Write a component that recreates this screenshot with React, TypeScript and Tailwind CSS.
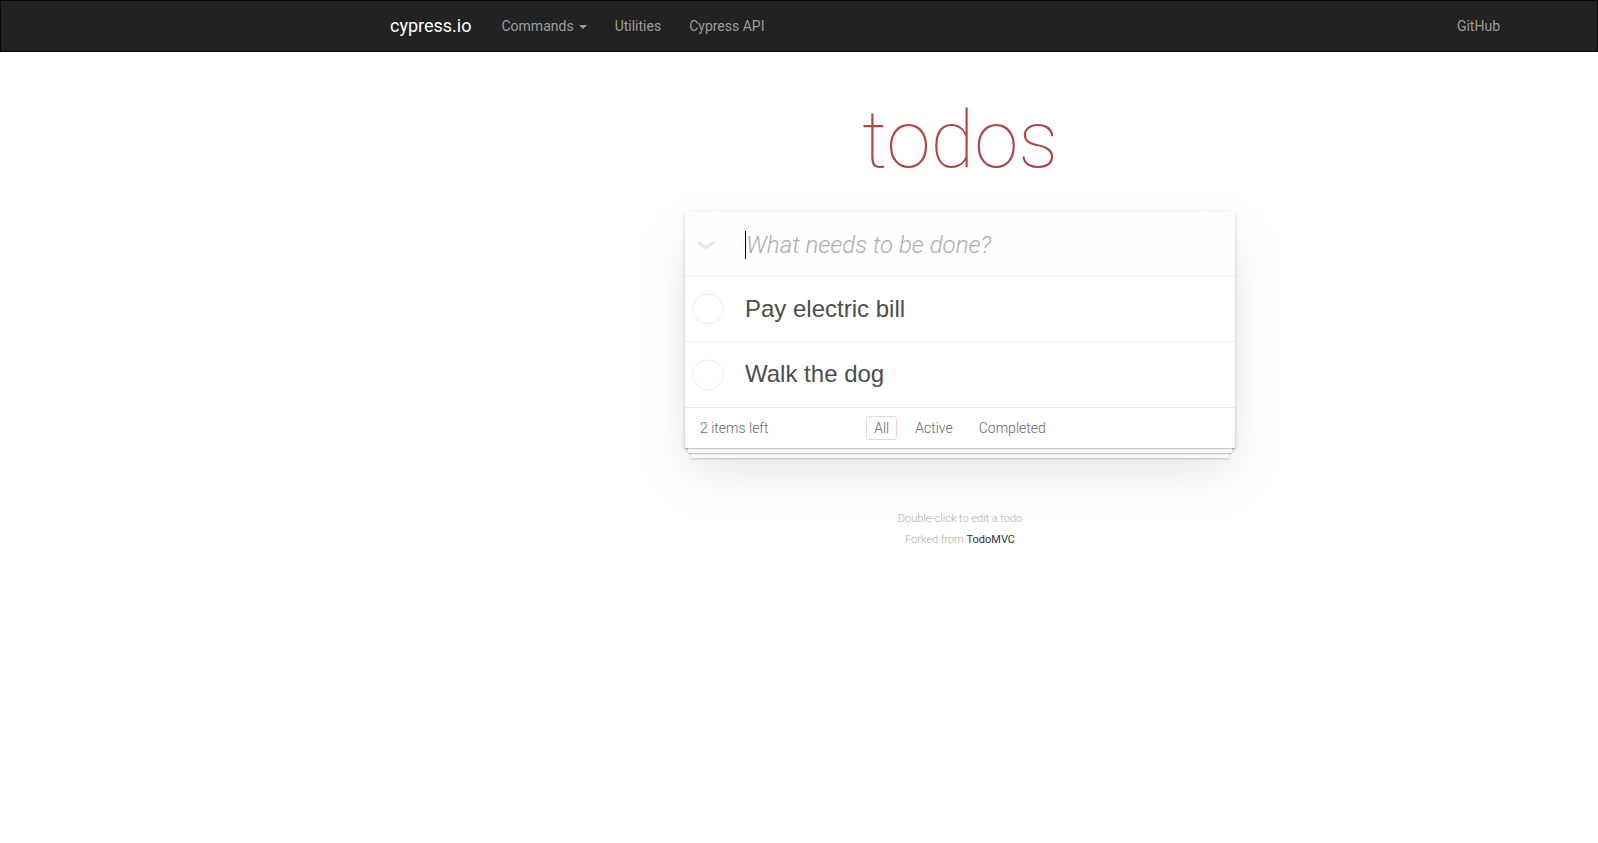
import React from 'react';

// ============================================================
// TodoMVC page — cypress.io example app
// ============================================================

type Todo = { id: number; title: string; completed: boolean };

const todos: Todo[] = [
    { id: 1, title: 'Pay electric bill', completed: false },
    { id: 2, title: 'Walk the dog', completed: false },
];

const navLinks = [
    { label: 'Commands', caret: true },
    { label: 'Utilities', caret: false },
    { label: 'Cypress API', caret: false },
];

const filters = ['All', 'Active', 'Completed'];

function Navbar() {
    return (
        <nav className="h-[52px] bg-[#222] border border-[#080808] flex items-center justify-between pl-[374px] pr-[82px] font-['Roboto',sans-serif]">
            <div className="flex items-center">
                <a href="#" className="pl-[15px] pr-[16px] text-[18px] text-white leading-[20px]">cypress.io</a>
                <ul className="flex items-center">
                    {navLinks.map((link) => (
                        <li key={link.label}>
                            <a href="#" className="flex items-center px-[14px] text-[14px] leading-[20px] text-[#9d9d9d]">
                                {link.label}
                                {link.caret && (
                                    <span className="ml-[5px] mt-[1px] w-0 h-0 border-x-[4px] border-x-transparent border-t-[4px] border-t-[#9d9d9d]" />
                                )}
                            </a>
                        </li>
                    ))}
                </ul>
            </div>
            <a href="#" className="px-[15px] text-[14px] leading-[20px] text-[#9d9d9d]">GitHub</a>
        </nav>
    );
}

function CheckCircle() {
    return (
        <svg width="32" height="32" viewBox="0 0 32 32" className="shrink-0">
            <circle cx="16" cy="16" r="15" fill="none" stroke="#ededed" strokeWidth="1" />
        </svg>
    );
}

function TodoApp() {
    return (
        <section className="ml-[685px] w-[550px]">
            <h1 className="mt-[48px] h-[80px] text-center text-[80px] leading-[80px] font-thin text-[#b04545] font-['Roboto',sans-serif]">
                todos
            </h1>

            <div className="mt-[32px] bg-white shadow-[0_2px_4px_0_rgba(0,0,0,0.2),0_25px_50px_0_rgba(0,0,0,0.1)]">
                {/* New todo input */}
                <header className="h-[65px] flex items-center bg-black/[0.003] shadow-[inset_0_-2px_1px_rgba(0,0,0,0.03)]">
                    <div className="w-[60px] flex justify-start pl-[12px] pt-[2px]">
                        <svg width="18" height="9" viewBox="0 0 18 9">
                            <path d="M2 2 L9 6.5 L16 2" fill="none" stroke="#e6e6e6" strokeWidth="3.2" strokeLinecap="round" strokeLinejoin="round" />
                        </svg>
                    </div>
                    <div className="flex items-center">
                        <span className="w-px h-[28px] bg-black" />
                        <span className="text-[24px] italic font-light text-[#adadad] font-['Roboto',sans-serif]">What needs to be done?</span>
                    </div>
                </header>

                {/* Todo list */}
                <ul>
                    {todos.map((todo) => (
                        <li key={todo.id} className="h-[65px] flex items-center border-b border-[#ededed] last:border-b-0">
                            <div className="w-[60px] pl-[7px]">
                                <CheckCircle />
                            </div>
                            <label className="text-[24px] text-[#4d4d4d] font-['Liberation_Sans',sans-serif] leading-[1.2]">
                                {todo.title}
                            </label>
                        </li>
                    ))}
                </ul>

                {/* Footer */}
                <footer className="h-[41px] border-t border-[#e6e6e6] px-[15px] grid grid-cols-[1fr_auto_1fr] items-center text-[14px] text-[#666] font-light font-['Roboto',sans-serif] shadow-[0_1px_1px_rgba(0,0,0,0.2),0_8px_0_-3px_#f9f9f9,0_9px_1px_-3px_rgba(0,0,0,0.2),0_16px_0_-6px_#f9f9f9,0_17px_2px_-6px_rgba(0,0,0,0.2)]">
                    <span>2 items left</span>
                    <ul className="flex items-center gap-[4px]">
                        {filters.map((f) => (
                            <li key={f}>
                                <a
                                    href="#"
                                    className={`block mx-[3px] px-[7px] py-[2px] leading-[18px] rounded-[3px] border ${f === 'All' ? 'border-[rgba(175,47,47,0.2)]' : 'border-transparent'}`}
                                >
                                    {f}
                                </a>
                            </li>
                        ))}
                    </ul>
                    <span />
                </footer>
            </div>
        </section>
    );
}

export default function App() {
    return (
        <div className="min-h-screen bg-white">
            <Navbar />
            <TodoApp />

            {/* Info */}
            <footer className="ml-[685px] w-[550px] mt-[65px] text-center text-[11px] leading-none text-[#aaa] font-light font-['Roboto',sans-serif]">
                <p>Double-click to edit a todo</p>
                <p className="mt-[10px]">
                    Forked from <a href="#" className="text-[#333] font-normal">TodoMVC</a>
                </p>
            </footer>
        </div>
    );
}
